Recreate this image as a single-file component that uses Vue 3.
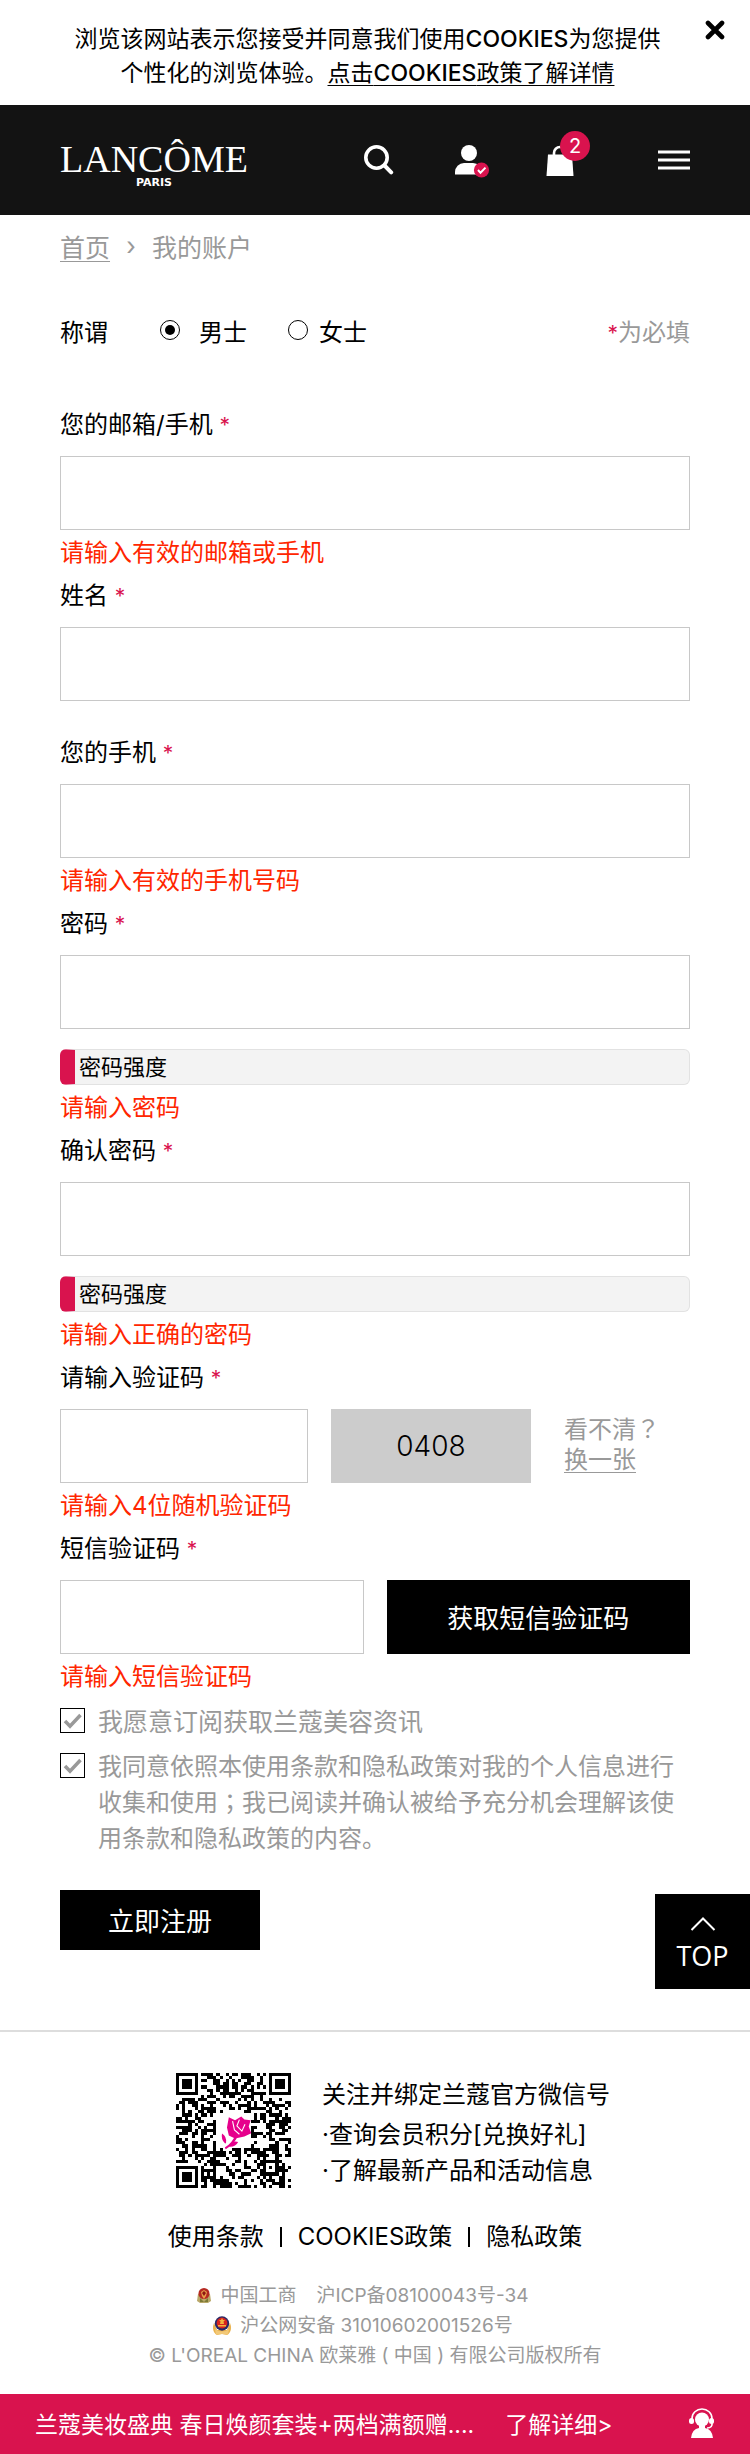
<script setup>
import { ref } from 'vue'

const gender = ref('m')
const subscribe = ref(true)
const agree = ref(true)

const SIZE = 37
const finders = [[0, 0], [SIZE - 7, 0], [0, SIZE - 7]]

function ring(x, y, cx, cy) {
  return Math.max(Math.abs(x - cx), Math.abs(y - cy))
}

function buildCode() {
  let seed = 20417
  let d = ''
  for (let y = 0; y < SIZE; y++) {
    for (let x = 0; x < SIZE; x++) {
      seed = (seed * 1103515245 + 12345) % 2147483648
      let on = (seed >> 12) % 100 < 52
      for (const [fx, fy] of finders) {
        const r = ring(x, y, fx + 3, fy + 3)
        if (r <= 4) on = r === 3 || r <= 1
      }
      const a = ring(x, y, 30, 30)
      if (a <= 2) on = a !== 1
      if (x > 12 && x < 24 && y > 12 && y < 24) on = false
      if (on) d += `M${x} ${y}h1v1h-1z`
    }
  }
  return d
}
const code = buildCode()
</script>

<template>
  <div class="page">
    <section class="cookies">
      <p>
        浏览该网站表示您接受并同意我们使用<b>COOKIES</b>为您提供<br />
        个性化的浏览体验。<a href="#cookies">点击<b>COOKIES</b>政策了解详情</a>
      </p>
      <button class="close" type="button" aria-label="关闭">
        <svg width="20" height="20" viewBox="0 0 20 20"><path d="M3 3l14 14M17 3L3 17" stroke="#000" stroke-width="4.6" stroke-linecap="round" /></svg>
      </button>
    </section>

    <header class="header">
      <a class="logo" href="#home">
        <span class="brand">LANCÔME</span>
        <span class="city">PARIS</span>
      </a>
      <nav class="tools">
        <button class="search" type="button" aria-label="搜索">
          <svg width="30" height="30" viewBox="0 0 30 30" fill="none" stroke="#fff"><circle cx="12.5" cy="12.5" r="10.7" stroke-width="3.6" /><path d="M20.5 20.5l6.7 6.8" stroke-width="4" stroke-linecap="round" /></svg>
        </button>
        <button class="user" type="button" aria-label="我的账户">
          <svg width="36" height="34" viewBox="0 0 36 34"><circle cx="15" cy="8" r="8" fill="#fff" /><path d="M1 29.500V27a9 9 0 0 1 9-9h9a9 9 0 0 1 9 9v2.500z" fill="#fff" /><circle cx="27.500" cy="25" r="7.600" fill="#d9134e" /><path d="M24 25l2.500 2.800 5-5.200" fill="none" stroke="#fff" stroke-width="2" /></svg>
        </button>
        <button class="bag" type="button" aria-label="购物袋">
          <svg width="28" height="31" viewBox="0 0 28 31"><path d="M2 9.500h24L27.500 31H.5z" fill="#fff" /><path d="M8 12V8a6 6 0 0 1 12 0v4" fill="none" stroke="#fff" stroke-width="2.600" /></svg>
          <span class="count">2</span>
        </button>
        <button class="menu" type="button" aria-label="菜单">
          <svg width="32" height="20" viewBox="0 0 32 20"><path d="M0 .5h32v3H0zM0 8.500h32v3H0zM0 16.500h32v3H0z" fill="#fff" /></svg>
        </button>
      </nav>
    </header>

    <main class="main">
      <nav class="crumbs">
        <a href="#home">首页</a><span class="arrow">›</span><span>我的账户</span>
      </nav>

      <form @submit.prevent>
        <div class="gender">
          <span class="title">称谓</span>
          <label class="male"><input v-model="gender" type="radio" name="gender" value="m" />男士</label>
          <label class="female"><input v-model="gender" type="radio" name="gender" value="f" />女士</label>
          <span class="required"><i>*</i>为必填</span>
        </div>

        <div class="field">
          <label for="account">您的邮箱/手机 <i>*</i></label>
          <input id="account" class="box" type="text" />
          <p class="error">请输入有效的邮箱或手机</p>
        </div>
        <div class="field plain">
          <label for="fullname">姓名 <i>*</i></label>
          <input id="fullname" class="box" type="text" />
        </div>
        <div class="field">
          <label for="phone">您的手机 <i>*</i></label>
          <input id="phone" class="box" type="tel" />
          <p class="error">请输入有效的手机号码</p>
        </div>
        <div class="field">
          <label for="password">密码 <i>*</i></label>
          <input id="password" class="box" type="password" />
          <div class="strength">密码强度</div>
          <p class="error">请输入密码</p>
        </div>
        <div class="field">
          <label for="confirm">确认密码 <i>*</i></label>
          <input id="confirm" class="box" type="password" />
          <div class="strength">密码强度</div>
          <p class="error">请输入正确的密码</p>
        </div>
        <div class="field">
          <label for="captcha">请输入验证码 <i>*</i></label>
          <div class="row">
            <input id="captcha" class="box captcha" type="text" />
            <div class="digits">0408</div>
            <div class="refresh">看不清<span class="mark">？</span><br /><a href="#refresh">换一张</a></div>
          </div>
          <p class="error">请输入4位随机验证码</p>
        </div>
        <div class="field">
          <label for="sms">短信验证码 <i>*</i></label>
          <div class="row halves">
            <input id="sms" class="box" type="text" />
            <button class="send" type="button">获取短信验证码</button>
          </div>
          <p class="error">请输入短信验证码</p>
        </div>

        <div class="checks">
          <label class="check">
            <span class="tick"><input v-model="subscribe" type="checkbox" /><svg v-if="subscribe" viewBox="0 0 25 25"><path d="M5 13l5 5.200L20.500 7" /></svg></span>
            <span>我愿意订阅获取兰蔻美容资讯</span>
          </label>
          <label class="check terms">
            <span class="tick"><input v-model="agree" type="checkbox" /><svg v-if="agree" viewBox="0 0 25 25"><path d="M5 13l5 5.200L20.500 7" /></svg></span>
            <span>我同意依照本使用条款和隐私政策对我的个人信息进行收集和使用<span class="mark">；</span>我已阅读并确认被给予充分机会理解该使用条款和隐私政策的内容。</span>
          </label>
        </div>
        <button class="submit" type="submit">立即注册</button>
      </form>

      <a class="top" href="#top">
        <svg width="26" height="14" viewBox="0 0 26 14"><path d="M1.500 13L13 1.500 24.500 13" fill="none" stroke="#fff" stroke-width="2" /></svg>
        TOP
      </a>
    </main>

    <footer class="footer">
      <div class="wechat">
        <svg class="qr" viewBox="0 0 37 37" role="img" aria-label="微信二维码">
          <path :d="code" fill="#000" shape-rendering="crispEdges" />
          <g fill="#e6008c">
            <path d="M17 14.200l2 1 2-1.200 1 1 2 .2-.6 2 .8 2.200-2.200 1-3 .7-2-1-.6-2.600z" />
            <path d="M19.300 19.500l.7.300q-1 3.200-4 4.700l-.3-.5q2.600-1.600 3.600-4.500z" />
            <path d="M15.800 22.700q-1.400-1.200-1-3.200 1.600 1 1.300 3zM17.200 23.400q1-1.800 2.800-1.200-.8 1.600-2.800 1.500z" />
          </g>
          <path d="M18.200 15.500l.6 2.800 1.600 1.400M20.400 15l-.8 2 1.600 1.700 1-2.200" fill="none" stroke="#fff" stroke-width=".35" />
        </svg>
        <div class="notes">
          <p class="lead">关注并绑定兰蔻官方微信号</p>
          <p>·查询会员积分[兑换好礼]</p>
          <p>·了解最新产品和活动信息</p>
        </div>
      </div>
      <nav class="links">
        <a href="#terms">使用条款</a><span class="bar"></span><a href="#cookies">COOKIES政策</a><span class="bar"></span><a href="#privacy">隐私政策</a>
      </nav>
      <div class="legal">
        <p class="shift">
          <svg width="14" height="16" viewBox="0 0 14 16"><path d="M1 6h12l1 7-3 2H3l-3-2z" fill="#b9a869" /><path d="M3 10l4 4 4-4v4H3z" fill="#7d7a36" /><circle cx="7" cy="5.500" r="5.500" fill="#b52a22" /><path d="M4 4l3-2 3 2-1 4-2 3-2-3z" fill="#e7a04a" /><path d="M5 5l2-2 2 2-2 3z" fill="#8f1712" /></svg>
          <span>中国工商</span><span class="icp">沪ICP备08100043号-34</span>
        </p>
        <p class="shift">
          <svg class="police" width="18" height="20" viewBox="0 0 18 20"><path d="M1 7q-3 8 3 12l5-1 5 1q6-4 3-12l-3 7H4z" fill="#eab24d" /><circle cx="9" cy="7.500" r="7.200" fill="#272a68" /><circle cx="9" cy="7" r="5.400" fill="#d8251d" /><path d="M9 2l1 2h2l-1.500 1.500L11 8H7l.5-2.500L6 4h2zM5 9h8v1.500H5z" fill="#f3b33d" /><path d="M2 13q7 5 14 0l-1 6q-6-2-12 0z" fill="#f2c877" /></svg>
          <span>沪公网安备 31010602001526号</span>
        </p>
        <p>© L'OREAL CHINA 欧莱雅 ( 中国 ) 有限公司版权所有</p>
      </div>
    </footer>

    <aside class="promo">
      <a class="offer" href="#offer">兰蔻美妆盛典 春日焕颜套装+两档满额赠....</a>
      <a href="#offer">了解详细&gt;</a>
      <button class="agent" type="button" aria-label="在线客服">
        <svg width="26" height="30" viewBox="0 0 26 30"><path d="M3 12V10.500a10 9.500 0 0 1 20 0V12" fill="none" stroke="#fff" stroke-width="1.600" /><circle cx="13" cy="11.500" r="7" fill="#fff" /><rect x="0" y="10" width="5" height="6" rx="2.500" fill="#fff" /><rect x="20" y="10" width="5" height="6" rx="2.500" fill="#fff" /><path d="M23 14q1 6-5 6" fill="none" stroke="#fff" stroke-width="1.500" /><path d="M10 17h6v3q7 1 8 10H2q1-9 8-10z" fill="#fff" /></svg>
      </button>
    </aside>
  </div>
</template>

<style>
body {
  background: #fff;
}
</style>

<style scoped>
.page {
  color: #000;
  font-family: Inter, "Noto Sans CJK SC", sans-serif;
  font-size: 24px;
}
p {
  margin: 0;
}
a {
  color: inherit;
  text-decoration: none;
}
i {
  color: #d9134e;
  font-size: 21px;
  font-style: normal;
  line-height: 1;
}
button {
  padding: 0;
  border: 0;
  background: none;
  color: inherit;
  font: inherit;
}
svg {
  display: block;
}
.mark {
  font-family: Inter, "Noto Sans CJK TC", sans-serif;
}

.cookies {
  position: relative;
  padding: 22px 75px 15px 60px;
  font-size: 23px;
  line-height: 34px;
  text-align: center;
}
.cookies b {
  font-weight: 500;
}
.cookies a,
.crumbs a,
.refresh a {
  text-decoration: underline;
  text-decoration-thickness: 1px;
  text-underline-offset: 4px;
}
.close {
  position: absolute;
  top: 20px;
  right: 25px;
}

.header {
  display: flex;
  align-items: flex-start;
  justify-content: space-between;
  box-sizing: border-box;
  height: 110px;
  padding: 26px 60px 0;
  background: #131313;
  color: #fff;
}
.logo {
  display: flex;
  flex-direction: column;
  align-items: center;
  padding-top: 8px;
}
.brand {
  font-family: "Liberation Serif", serif;
  font-size: 38px;
  line-height: 40px;
}
.city {
  font-family: "DejaVu Sans", sans-serif;
  font-size: 11px;
  font-weight: 700;
  line-height: 8px;
}
.tools {
  display: flex;
  gap: 56px;
  padding-top: 14px;
}
.tools button {
  display: flex;
  align-items: flex-start;
  height: 34px;
}
.search {
  width: 34px;
}
.bag {
  position: relative;
  width: 44px;
}
.count {
  position: absolute;
  top: -14px;
  right: 0;
  width: 30px;
  border-radius: 50%;
  background: #d9134e;
  font-size: 20px;
  line-height: 30px;
  text-align: center;
}
.tools .menu {
  margin-left: 12px;
  padding-top: 5px;
}

.main {
  position: relative;
  padding: 0 60px 80px;
}
.crumbs {
  display: flex;
  align-items: center;
  height: 62px;
  color: #999;
  font-size: 25px;
}
.arrow {
  width: 42px;
  text-align: center;
}

.gender {
  display: flex;
  align-items: center;
  height: 40px;
  margin: 33px 0 55px;
}
.gender label {
  display: flex;
  align-items: center;
}
.male {
  gap: 19px;
  margin-left: 52px;
}
.female {
  gap: 11px;
  margin-left: 41px;
}
.gender input {
  appearance: none;
  display: grid;
  place-items: center;
  width: 20px;
  height: 20px;
  margin: 0;
  border: 1px solid #000;
  border-radius: 50%;
}
.gender input:checked::before {
  content: "";
  width: 10px;
  height: 10px;
  border-radius: 50%;
  background: #000;
}
.required {
  margin-left: auto;
  color: #999;
}

.field label {
  display: block;
  margin-bottom: 11px;
  line-height: 40px;
}
.plain {
  margin-bottom: 32px;
}
.box {
  display: block;
  box-sizing: border-box;
  width: 100%;
  height: 74px;
  padding: 0 20px;
  border: 1px solid #c8c8c8;
  border-radius: 0;
  background: #fff;
  font: inherit;
}
.error {
  color: #ff2600;
  line-height: 46px;
}
.strength {
  box-sizing: border-box;
  height: 36px;
  margin-top: 20px;
  padding-left: 4px;
  border: 1px solid #e2e2e2;
  border-left: 15px solid #d9134e;
  border-radius: 6px;
  background: #f3f3f3;
  font-size: 22px;
  line-height: 34px;
}
.row {
  display: flex;
  gap: 23px;
}
.row .captcha {
  flex: 1;
  min-width: 0;
}
.digits {
  width: 200px;
  background: #ccc;
  font-size: 28px;
  font-weight: 300;
  line-height: 74px;
  text-align: center;
}
.refresh {
  width: 126px;
  padding: 6px 0 0 10px;
  color: #999;
  line-height: 30px;
}
.halves {
  display: grid;
  grid-template-columns: 1fr 1fr;
}
.send {
  padding-bottom: 2px;
  background: #000;
  color: #fff;
  font-size: 26px;
}

.checks {
  display: flex;
  flex-direction: column;
  gap: 9px;
  padding-top: 4px;
}
.check {
  display: flex;
  gap: 13px;
  color: #999;
  font-size: 25px;
  line-height: 36px;
}
.terms {
  font-size: 24px;
}
.tick {
  position: relative;
  flex: none;
  width: 25px;
  height: 25px;
  margin-top: 4px;
}
.tick input {
  appearance: none;
  display: block;
  box-sizing: border-box;
  width: 25px;
  height: 25px;
  margin: 0;
  border: 1px solid #000;
}
.tick svg {
  position: absolute;
  inset: 0;
  fill: none;
  stroke: #999;
  stroke-width: 3.5;
  pointer-events: none;
}
.submit {
  display: block;
  width: 200px;
  height: 60px;
  margin-top: 33px;
  padding-bottom: 2px;
  background: #000;
  color: #fff;
  font-size: 26px;
}
.top {
  position: absolute;
  right: 0;
  bottom: 41px;
  display: flex;
  flex-direction: column;
  align-items: center;
  gap: 8px;
  box-sizing: border-box;
  width: 95px;
  height: 95px;
  padding-top: 23px;
  background: #000;
  color: #fff;
  font-family: "Open Sans", sans-serif;
  font-size: 27px;
  line-height: 34px;
}

.footer {
  padding: 41px 20px 23px;
  border-top: 2px solid #ddd;
}
.wechat {
  display: flex;
  justify-content: center;
  gap: 31px;
  padding-left: 36px;
}
.qr {
  width: 115px;
  height: 115px;
}
.notes {
  padding-top: 4px;
  line-height: 36px;
}
.lead {
  margin-bottom: 4px;
}
.links {
  display: flex;
  align-items: center;
  justify-content: center;
  gap: 16px;
  margin-top: 30px;
  line-height: 36px;
}
.bar {
  width: 2px;
  height: 20px;
  background: #000;
}
.legal {
  margin-top: 26px;
  color: #999;
  font-size: 19px;
  line-height: 30px;
}
.legal p {
  display: flex;
  align-items: center;
  justify-content: center;
}
.legal .shift {
  gap: 9px;
  padding-right: 24px;
}
.icp {
  margin-left: 11px;
}

.promo {
  display: flex;
  align-items: center;
  box-sizing: border-box;
  height: 60px;
  padding: 0 35px 2px;
  background: #d9134e;
  color: #fff;
  font-size: 23px;
  white-space: nowrap;
}
.offer {
  margin-right: 31px;
}
.agent {
  margin-left: auto;
}
</style>
